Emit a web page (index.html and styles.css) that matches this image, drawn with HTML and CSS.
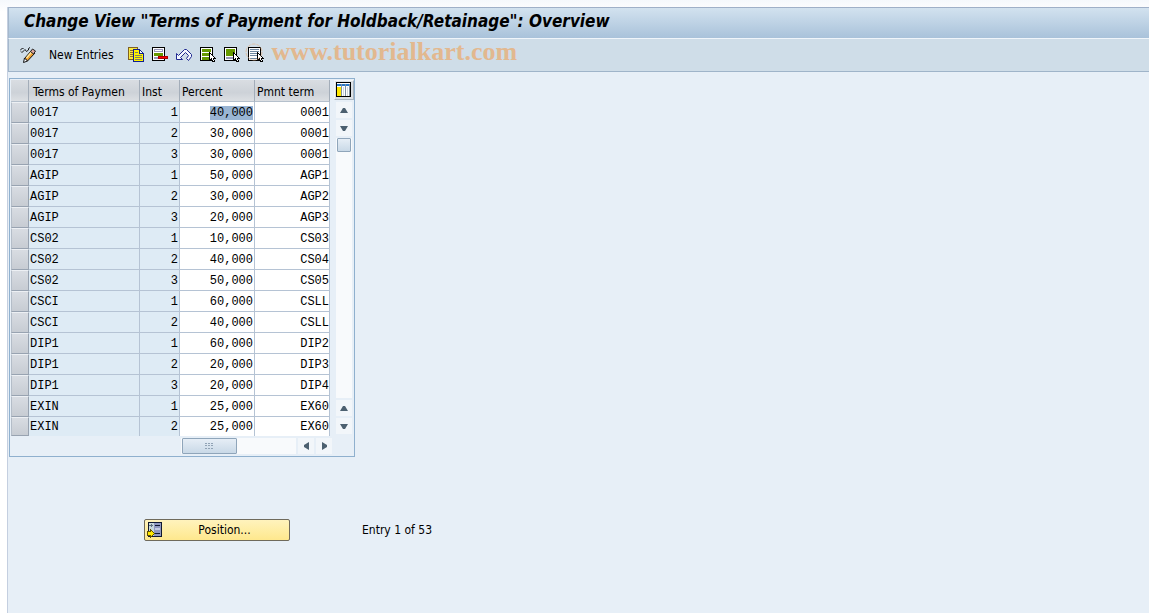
FILE: index.html
```html
<!DOCTYPE html>
<html lang="en">
<head>
    <meta charset="UTF-8">
    <meta name="viewport" content="width=device-width, initial-scale=1.0">
    <title>Change View "Terms of Payment for Holdback/Retainage": Overview</title>
    <link rel="stylesheet" href="styles.css">
</head>
<body>
    <div class="window">
        <header class="titlebar">
            <h1>Change View "Terms of Payment for Holdback/Retainage": Overview</h1>
        </header>

        <div class="toolbar">
            <button type="button" class="tool" aria-label="Display/Change">
                <svg width="16" height="16" viewBox="0 0 16 16">
                    <path d="M0 3.500L2.500 1l1 1M1 4.500l1 1 2-2 1-1 1.500 2 2-1.500V1.500L10 .5" fill="none" stroke="#111"/>
                    <path d="M4.500 11.500l7-8 3.500 2.500-7.500 8z" fill="#f0a030" stroke="#111"/>
                    <path d="M6.500 11l6-7" stroke="#ffe8a0" stroke-width="1.500"/>
                    <path d="M10.500 4.500l2-2.500 3 2-2 3z" fill="#e0a8a0" stroke="#222"/>
                    <path d="M4.500 11l3 3-4 1.500z" fill="#fff" stroke="#111"/>
                </svg>
            </button>
            <button type="button" class="tool tool-text">New Entries</button>
            <button type="button" class="tool" aria-label="Copy As">
                <svg width="16" height="16" viewBox="0 0 16 16" shape-rendering="crispEdges">
                    <path d="M.5 .5h9v12h-9z" fill="#f8e840" stroke="#806020"/>
                    <path d="M2 3.500h3M2 5.500h3M2 7.500h3M2 9.500h3" stroke="#907030"/>
                    <path d="M5.500 2.500h6l4 4v8h-10z" fill="#fff200" stroke="#102090"/>
                    <path d="M11.500 2.500v4h4z" fill="#fff" stroke="#102090"/>
                    <path d="M7 5.500h3M7 8.500h7M7 10.500h7M7 12.500h7" stroke="#808060"/>
                </svg>
            </button>
            <button type="button" class="tool" aria-label="Delete">
                <svg width="16" height="16" viewBox="0 0 16 16" shape-rendering="crispEdges">
                    <path d="M.5 .5h12v13h-12z" fill="#fff" stroke="#000"/>
                    <path d="M2.500 2.500h8v2h-8zM2.500 10.500h8v1h-8z" fill="#fff" stroke="#9898b8"/>
                    <path d="M2 6h9v3H2z" fill="#669900"/>
                    <path d="M6.500 9.500h9v2h-9z" fill="#f00" stroke="#a00"/>
                </svg>
            </button>
            <button type="button" class="tool" aria-label="Undo Change">
                <svg width="16" height="16" viewBox="0 0 16 16">
                    <path d="M.5 6.500v6h6l-2-2 5-5 3 3-2 3 2 2 3-4v-2l-5-5h-2l-6 6z" fill="#f4f8ff" stroke="#202890"/>
                </svg>
            </button>
            <button type="button" class="tool" aria-label="Select All">
                <svg width="16" height="16" viewBox="0 0 16 16" shape-rendering="crispEdges">
                    <path d="M.5 .5h12v13h-12z" fill="#fff" stroke="#000"/>
                    <path d="M2 2h9v3H2zM2 6h9v3H2zM2 10h9v3H2z" fill="#669900"/>
                    <path d="M9.500 5.500v8l2-2 1 3h2l-1-3h2z" fill="#fff" stroke="#000"/>
                </svg>
            </button>
            <button type="button" class="tool" aria-label="Select Block">
                <svg width="16" height="16" viewBox="0 0 16 16" shape-rendering="crispEdges">
                    <path d="M.5 .5h12v13h-12z" fill="#fff" stroke="#000"/>
                    <path d="M2 2h9v7H2z" fill="#669900"/>
                    <path d="M2.500 10.500h7v1h-7z" fill="#fff" stroke="#9898b8"/>
                    <path d="M9.500 5.500v8l2-2 1 3h2l-1-3h2z" fill="#fff" stroke="#000"/>
                </svg>
            </button>
            <button type="button" class="tool" aria-label="Deselect All">
                <svg width="16" height="16" viewBox="0 0 16 16" overflow="visible">
                    <g shape-rendering="crispEdges">
                        <path d="M.5 .5h12v13h-12z" fill="#fff" stroke="#000"/>
                        <path d="M2 2.500h9M2 4.500h9M2 6.500h9M2 8.500h9M2 11.500h8" stroke="#7088a0"/>
                        <path d="M9.500 5.500v8l2-2 1 3h2l-1-3h2z" fill="#fff" stroke="#000"/>
                    </g>
                    <circle cx="6" cy="5" r="8" fill="none" stroke="#e2b48a" stroke-opacity=".7" stroke-dasharray="4 1"/>
                </svg>
            </button>
            <span class="watermark">www.tutorialkart.com</span>
        </div>

        <main>
            <div class="grid-panel">
                <table class="terms">
                    <colgroup>
                        <col class="col-select"><col class="col-terms"><col class="col-inst"><col class="col-percent"><col class="col-term">
                    </colgroup>
                    <thead>
                        <tr><th></th><th class="first">Terms of Paymen</th><th>Inst</th><th>Percent</th><th>Pmnt term</th></tr>
                    </thead>
                    <tbody>
                        <tr><th></th><td>0017</td><td>1</td><td><span class="selected">40,000</span></td><td>0001</td></tr>
                        <tr><th></th><td>0017</td><td>2</td><td>30,000</td><td>0001</td></tr>
                        <tr><th></th><td>0017</td><td>3</td><td>30,000</td><td>0001</td></tr>
                        <tr><th></th><td>AGIP</td><td>1</td><td>50,000</td><td>AGP1</td></tr>
                        <tr><th></th><td>AGIP</td><td>2</td><td>30,000</td><td>AGP2</td></tr>
                        <tr><th></th><td>AGIP</td><td>3</td><td>20,000</td><td>AGP3</td></tr>
                        <tr><th></th><td>CS02</td><td>1</td><td>10,000</td><td>CS03</td></tr>
                        <tr><th></th><td>CS02</td><td>2</td><td>40,000</td><td>CS04</td></tr>
                        <tr><th></th><td>CS02</td><td>3</td><td>50,000</td><td>CS05</td></tr>
                        <tr><th></th><td>CSCI</td><td>1</td><td>60,000</td><td>CSLL</td></tr>
                        <tr><th></th><td>CSCI</td><td>2</td><td>40,000</td><td>CSLL</td></tr>
                        <tr><th></th><td>DIP1</td><td>1</td><td>60,000</td><td>DIP2</td></tr>
                        <tr><th></th><td>DIP1</td><td>2</td><td>20,000</td><td>DIP3</td></tr>
                        <tr><th></th><td>DIP1</td><td>3</td><td>20,000</td><td>DIP4</td></tr>
                        <tr><th></th><td>EXIN</td><td>1</td><td>25,000</td><td>EX60</td></tr>
                        <tr><th></th><td>EXIN</td><td>2</td><td>25,000</td><td>EX60</td></tr>
                    </tbody>
                </table>

                <div class="vscroll">
                    <button type="button" class="config" aria-label="Configuration">
                        <svg width="15" height="15" viewBox="0 0 15 15" shape-rendering="crispEdges">
                            <path d="M0 0h15v15H0z" fill="#000"/>
                            <path d="M1 1h13v13H1z" fill="#fff"/>
                            <path d="M1 2h13v2H1z" fill="#2878c8"/>
                            <path d="M1 5h4v9H1z" fill="#ffe800"/>
                            <path d="M5.500 2v12M9.500 2v12M13.500 2v12" stroke="#8090a0"/>
                            <path d="M7 5h1v9H7zM11 5h1v9h-1z" fill="#d0d8e0"/>
                        </svg>
                    </button>
                    <button type="button" class="arrow" aria-label="Scroll to top"><svg width="8" height="5" viewBox="0 0 8 5"><path d="M0 5l3-5h2l3 5z" fill="#4c6070"/></svg></button>
                    <button type="button" class="arrow" aria-label="Scroll up"><svg width="8" height="5" viewBox="0 0 8 5"><path d="M0 0l3 5h2l3-5z" fill="#4c6070"/></svg></button>
                    <div class="vtrack"><div class="vthumb"></div></div>
                    <button type="button" class="arrow" aria-label="Scroll down"><svg width="8" height="5" viewBox="0 0 8 5"><path d="M0 5l3-5h2l3 5z" fill="#4c6070"/></svg></button>
                    <button type="button" class="arrow" aria-label="Scroll to bottom"><svg width="8" height="5" viewBox="0 0 8 5"><path d="M0 0l3 5h2l3-5z" fill="#4c6070"/></svg></button>
                </div>

                <div class="hscroll">
                    <div class="htrack">
                        <div class="hthumb">
                            <svg width="9" height="6" viewBox="0 0 9 6" shape-rendering="crispEdges"><path d="M0 .5h9M0 2.500h9M0 5.500h9" stroke="#91a3b5" stroke-dasharray="2 1"/></svg>
                        </div>
                    </div>
                    <button type="button" class="arrow" aria-label="Scroll left"><svg width="5" height="8" viewBox="0 0 5 8"><path d="M5 0L0 3v2l5 3z" fill="#4c6070"/></svg></button>
                    <button type="button" class="arrow" aria-label="Scroll right"><svg width="5" height="8" viewBox="0 0 5 8"><path d="M0 0l5 3v2L0 8z" fill="#4c6070"/></svg></button>
                </div>
            </div>

            <div class="footer">
                <button type="button" class="position">
                    <svg width="15" height="16" viewBox="0 0 15 16" shape-rendering="crispEdges">
                        <path d="M1 0h14v15H1z" fill="#101830"/>
                        <path d="M2 1h5v13H2z" fill="#c8d8dc"/>
                        <path d="M7 1h7v13H7z" fill="#9098c0"/>
                        <path d="M8 3.500h5M8 11.500h5" stroke="#101830"/>
                        <path d="M8 6h5v2H8z" fill="#c4cce4"/>
                        <path d="M2 3.500h4M4.500 2v3M5.500 3v1" stroke="#607080"/>
                        <path d="M.5 9.500h3v-2l4 4-4 4v-2h-3z" fill="#ffe800" stroke="#605000"/>
                    </svg>
                    <span>Position...</span>
                </button>
                <span>Entry 1 of 53</span>
            </div>
        </main>
    </div>
</body>
</html>
```
FILE: styles.css
```css
* {
    box-sizing: border-box;
}

body {
    margin: 0;
    background: linear-gradient(#f5f8fc, #fff 12px);
    font-family: "DejaVu Sans Condensed", "DejaVu Sans", sans-serif;
    font-stretch: condensed;
    font-size: 12px;
    color: #000;
}

button {
    font: inherit;
    color: inherit;
    padding: 0;
    border: 0;
    background: none;
}

svg {
    display: block;
    flex: none;
}

.window {
    margin: 7px 0 0 7px;
    min-height: calc(100vh - 7px);
    border-left: 1px solid #c4cfe0;
    background-color: #e7eff7;
}

.titlebar {
    height: 32px;
    padding-left: 15px;
    border-top: 1px solid #9fb0c8;
    border-left: 1px solid #a5b8cc;
    border-bottom: 1px solid #f0f5fa;
    background: linear-gradient(#d2e2ef, #a9c2da);
}

.titlebar h1 {
    margin: 0;
    font-size: 17px;
    line-height: 26px;
    font-style: italic;
    white-space: nowrap;
}

.toolbar {
    display: flex;
    align-items: center;
    gap: 8px;
    height: 33px;
    padding-left: 11px;
    border-left: 1px solid #a5b8cc;
    border-bottom: 1px solid #9fb4c9;
    background-color: #cfdde8;
}

.tool-text {
    margin: 0 6px 0 5px;
    white-space: nowrap;
}

.watermark {
    font-family: "Liberation Serif", serif;
    font-size: 26px;
    line-height: 28px;
    font-weight: bold;
    color: #e2b88f;
    padding-bottom: 6px;
}

main {
    padding: 6px 1px;
}

/* Table control */
.grid-panel {
    display: grid;
    grid-template-columns: 319px auto;
    column-gap: 4px;
    width: max-content;
    padding: 1px 0 0 1px;
    border: 1px solid #8fb0ce;
    background-color: #e7eff7;
}

.terms {
    width: 319px;
    table-layout: fixed;
    border-collapse: separate;
    border-spacing: 0;
}

.col-select {
    width: 18px;
}

.col-terms {
    width: 111px;
}

.col-inst {
    width: 40px;
}

.col-percent,
.col-term {
    width: 75px;
}

.terms th,
.terms td {
    height: 21px;
    padding: 0;
    white-space: nowrap;
}

.terms thead th {
    height: 22px;
    padding: 2px 0 0 2px;
    font-weight: normal;
    text-align: left;
    border-right: 1px solid #a3adb9;
    border-bottom: 1px solid #b5c0cc;
    background: linear-gradient(#d9dde2, #cdd2d8 60%, #dcdfe3);
}

.terms thead th.first {
    padding-left: 4px;
}

.terms tbody th {
    border: 1px solid #98a3b1;
    border-top-color: #edf0f4;
    border-left-color: #b4bdc8;
    background: linear-gradient(#d8dce2, #c7ccd3);
}

.terms td {
    padding-top: 2px;
    border-right: 1px solid #b5c3d4;
    border-bottom: 1px solid #b5c3d4;
    background-color: #fff;
    font-family: "Liberation Mono", monospace;
    font-size: 12px;
    line-height: 16px;
    text-align: right;
}

.terms td:nth-child(2),
.terms td:nth-child(3) {
    background-color: #deebf5;
}

.terms td:nth-child(2) {
    padding-left: 1px;
    text-align: left;
}

.terms td:nth-child(3),
.terms td:nth-child(4) {
    padding-right: 1px;
}

.terms tbody tr:last-child td,
.terms tbody tr:last-child th {
    height: 19px;
}

.terms tbody tr:last-child td {
    padding-top: 0;
    border-bottom: 0;
}

.selected {
    background-color: #9ab5d3;
}

/* Scroll bars */
.vscroll {
    display: flex;
    flex-direction: column;
    align-items: center;
}

.config {
    padding: 1px 2px 2px 1px;
    margin-bottom: 2px;
    border: 1px solid #a8b4c0;
    border-top-color: #f4f6f8;
    border-left-color: #f4f6f8;
    background-color: #dce1e6;
}

.arrow {
    display: flex;
    align-items: center;
    justify-content: center;
    width: 16px;
    height: 16px;
    margin: 0 0 2px;
    background-color: #f2f6fa;
}

.vtrack {
    flex: 1;
    width: 16px;
    margin-bottom: 2px;
    background-color: #f8fafc;
}

.vthumb,
.hthumb {
    border: 1px solid #8fa5ba;
    border-radius: 1px;
    background: linear-gradient(#e6eef6, #c9d9e7);
}

.vthumb {
    height: 14px;
    margin: 0 1px;
}

.hscroll {
    grid-column: 1 / -1;
    display: flex;
    gap: 2px;
    padding: 2px 0 0 170px;
}

.htrack {
    width: 115px;
    height: 16px;
    background-color: #f8fafc;
}

.hthumb {
    display: flex;
    align-items: center;
    justify-content: center;
    width: 55px;
    height: 16px;
    margin-left: 1px;
}

.footer {
    display: flex;
    align-items: center;
    gap: 72px;
    padding: 62px 0 0 135px;
}

.position {
    display: flex;
    align-items: center;
    width: 146px;
    height: 22px;
    padding: 0 2px;
    border: 1px solid #6f6a5c;
    border-radius: 2px;
    background: linear-gradient(#fff3bd, #fee88d);
}

.position span {
    flex: 1;
    text-align: center;
}
```
